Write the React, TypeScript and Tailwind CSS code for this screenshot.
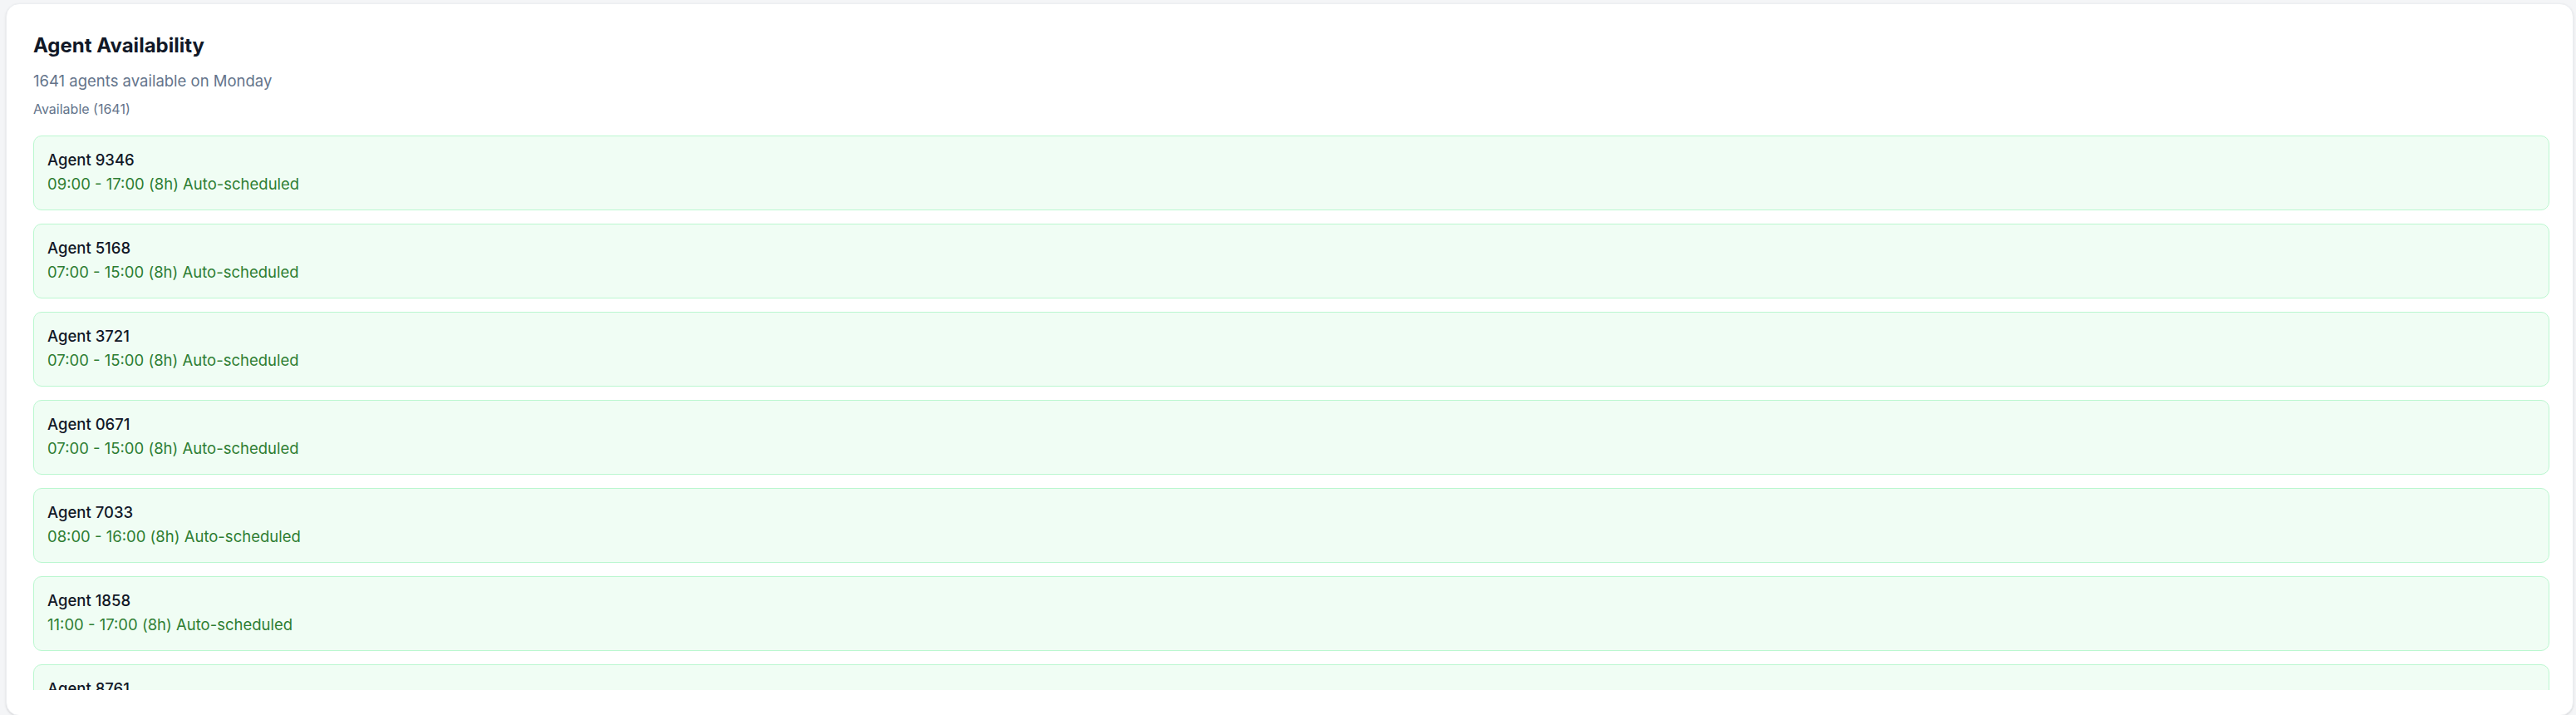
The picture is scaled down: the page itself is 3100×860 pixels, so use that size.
const agents = [
  { id: "9346", start: "09:00", end: "17:00", hours: 8 },
  { id: "5168", start: "07:00", end: "15:00", hours: 8 },
  { id: "3721", start: "07:00", end: "15:00", hours: 8 },
  { id: "0671", start: "07:00", end: "15:00", hours: 8 },
  { id: "7033", start: "08:00", end: "16:00", hours: 8 },
  { id: "1858", start: "11:00", end: "17:00", hours: 8 },
  { id: "8761", start: "09:00", end: "17:00", hours: 8 },
  { id: "2204", start: "10:00", end: "18:00", hours: 8 },
];

export default function App() {
  return (
    <div
      className="min-h-[860px] bg-[#f4f5f7] pl-[7px] pr-[3px] pt-[4px]"
      style={{ fontFamily: "Inter, 'Noto Sans', sans-serif" }}
    >
      <div className="rounded-2xl border border-[#eceef1] bg-white pl-8 pr-7 pt-[34px] pb-[30px] shadow-sm">
        <h2 className="text-2xl leading-8 font-bold text-[#111827]">Agent Availability</h2>
        <p className="mt-3 text-[18.5px] leading-7 text-[#64748b]">1641 agents available on Monday</p>
        <p className="mt-2 text-base leading-6 text-[#64748b]">Available (1641)</p>
        <div className="mt-5 h-[667px] overflow-hidden">
          <div className="flex flex-col gap-4">
            {agents.map((a) => (
              <div
                key={a.id}
                className="rounded-[10px] border border-[#bbf7d0] bg-[#f0fdf4] px-4 pt-[14px] pb-[17px]"
              >
                <div className="text-[18.5px] leading-7 font-medium text-[#111827]">Agent {a.id}</div>
                <div className="mt-px text-[18.5px] leading-7 text-[#2e7d32]">
                  {a.start} - {a.end} ({a.hours}h) Auto-scheduled
                </div>
              </div>
            ))}
          </div>
        </div>
      </div>
    </div>
  );
}
